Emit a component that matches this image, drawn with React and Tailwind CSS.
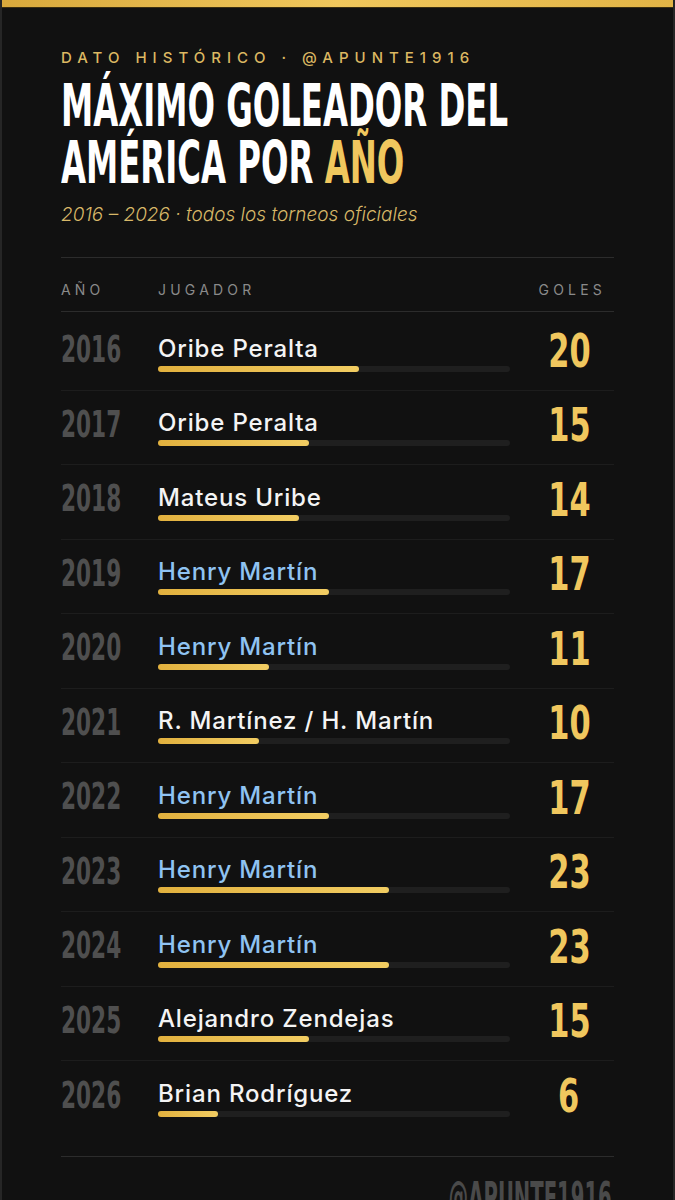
import React from "react";

const rows = [
  { y: "2016", n: "Oribe Peralta", g: 20, blue: false },
  { y: "2017", n: "Oribe Peralta", g: 15, blue: false },
  { y: "2018", n: "Mateus Uribe", g: 14, blue: false },
  { y: "2019", n: "Henry Martín", g: 17, blue: true },
  { y: "2020", n: "Henry Martín", g: 11, blue: true },
  { y: "2021", n: "R. Martínez / H. Martín", g: 10, blue: false },
  { y: "2022", n: "Henry Martín", g: 17, blue: true },
  { y: "2023", n: "Henry Martín", g: 23, blue: true },
  { y: "2024", n: "Henry Martín", g: 23, blue: true },
  { y: "2025", n: "Alejandro Zendejas", g: 15, blue: false },
  { y: "2026", n: "Brian Rodríguez", g: 6, blue: false },
];

const cond = { fontFamily: '"Liberation Sans Narrow", "DejaVu Sans Condensed", sans-serif' };
const body = { fontFamily: 'Inter, "Noto Sans", sans-serif' };

export default function App() {
  return (
    <div className="w-[675px] h-[1200px] overflow-hidden bg-[#111111] border-x-2 border-[#262626]" style={body}>
      <div className="h-[8px] bg-gradient-to-r from-[#d9a93c] via-[#f0c75c] to-[#e2b446] border-b border-[#3a2e10]" />
      <div className="px-[59px] pt-[40px]">
        <div className="text-[15px] tracking-[0.4em] text-[#dcb862] font-medium leading-[20px] whitespace-nowrap">
          DATO HISTÓRICO · @APUNTE1916
        </div>
        <h1 className="mt-[10px] text-[58px] font-bold text-white" style={cond}>
          <div className="w-max h-[57px] leading-[57px] origin-left scale-x-[0.62] whitespace-nowrap">
            MÁXIMO GOLEADOR DEL
          </div>
          <div className="w-max h-[57px] leading-[57px] origin-left scale-x-[0.62] whitespace-nowrap">
            AMÉRICA POR <span className="text-[#f0c75e]">AÑO</span>
          </div>
        </h1>
        <div className="mt-[10px] text-[19px] italic font-light text-[#d8b868] leading-[26px]">
          2016 – 2026 · todos los torneos oficiales
        </div>

        <div className="mt-[29px] border-t border-[#2c2c2c]" />
        <div className="grid grid-cols-[97px_352px_1fr] items-center h-[54px] pt-[9px] border-b border-[#2c2c2c] text-[14px] tracking-[0.3em] text-[#8a8a8a]">
          <div>AÑO</div>
          <div>JUGADOR</div>
          <div className="text-right pr-[8px]">GOLES</div>
        </div>

        <div className="pt-[4px]">
          {rows.map((r, i) => (
            <div
              key={r.y}
              className={`grid grid-cols-[97px_352px_1fr] items-center h-[74.5px] ${i < rows.length - 1 ? "border-b border-[#1d1d1d]" : ""}`}
            >
              <div className="pb-[6px] text-[37px] font-bold text-[#4f4f4f] leading-none" style={cond}>
                <div className="w-max origin-left scale-x-[0.65]">{r.y}</div>
              </div>
              <div className="pt-[1px]">
                <div className={`text-[24px] tracking-[0.035em] font-medium leading-[28px] whitespace-nowrap ${r.blue ? "text-[#8fc3f2]" : "text-[#f4f4f4]"}`}>
                  {r.n}
                </div>
                <div className="mt-[3px] h-[6px] rounded-full bg-[#1f1f1f]">
                  <div
                    className="h-full rounded-full bg-gradient-to-r from-[#e2b13e] to-[#f2cd62]"
                    style={{ width: `${(r.g / 35) * 100}%` }}
                  />
                </div>
              </div>
              <div className="pb-[5px] pl-[14px] flex justify-center text-[47px] font-bold text-[#f0c75e] leading-none" style={cond}>
                <div className="w-max scale-x-[0.72]">{r.g}</div>
              </div>
            </div>
          ))}
        </div>

        <div className="mt-[20px] border-t border-[#2c2c2c]" />
        <div className="flex justify-end pr-[2px] pt-[20px] text-[42px] font-bold text-[#4a4a4a] leading-none" style={cond}>
          <div className="w-max origin-right scale-x-[0.52]">@APUNTE1916</div>
        </div>
      </div>
    </div>
  );
}
